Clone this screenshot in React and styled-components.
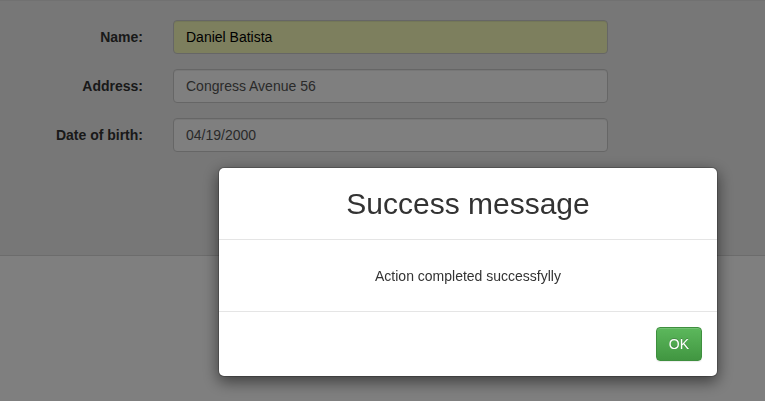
import React from "react";
import styled, { createGlobalStyle } from "styled-components";

const Global = createGlobalStyle`
  html, body { margin: 0; padding: 0; background: #fff; }
  body { font-family: "Liberation Sans", Arial, sans-serif; font-size: 14px; color: #333; }
  * { box-sizing: border-box; }
`;

const Panel = styled.div`
  height: 256px;
  background: #eeeeee;
  border-top: 1px solid #e2e2e2;
  border-bottom: 1px solid #d8d8d8;
  padding-top: 19px;
`;

const Form = styled.form`
  display: flex;
  flex-direction: column;
  gap: 15px;
  margin: 0;
`;

const Row = styled.div`
  display: flex;
  align-items: center;
`;

const Label = styled.label`
  width: 143px;
  margin-right: 30px;
  text-align: right;
  font-weight: bold;
  font-size: 14px;
  color: #333;
`;

const Input = styled.input`
  width: 435px;
  height: 34px;
  padding: 6px 12px;
  font-family: "Liberation Sans", Arial, sans-serif;
  font-size: 14px;
  color: ${(p) => (p.$autofill ? "#000" : "#555")};
  background: ${(p) => (p.$autofill ? "rgb(250,255,189)" : "#fff")};
  border: 1px solid #ccc;
  border-radius: 4px;
  box-shadow: inset 0 1px 1px rgba(0, 0, 0, 0.075);
  outline: none;
`;

const Overlay = styled.div`
  position: fixed;
  inset: 0;
  background: rgba(0, 0, 0, 0.5);
  padding: 167px 0 0 218px;
`;

const Modal = styled.div`
  width: 500px;
  background: #fff;
  border: 1px solid rgba(0, 0, 0, 0.2);
  border-radius: 6px;
  box-shadow: 0 5px 15px rgba(0, 0, 0, 0.5);
  background-clip: padding-box;
`;

const Header = styled.div`
  height: 72px;
  display: flex;
  align-items: center;
  justify-content: center;
  border-bottom: 1px solid #e5e5e5;
`;

const Title = styled.h2`
  margin: 0;
  font-size: 30px;
  font-weight: normal;
  color: #333;
  line-height: 1.1;
`;

const Body = styled.div`
  height: 72px;
  display: flex;
  align-items: center;
  justify-content: center;
  border-bottom: 1px solid #e5e5e5;
  font-size: 14px;
  color: #333;
`;

const Footer = styled.div`
  display: flex;
  justify-content: flex-end;
  padding: 15px;
`;

const Button = styled.button`
  height: 34px;
  padding: 6px 12px;
  font-family: "Liberation Sans", Arial, sans-serif;
  font-size: 14px;
  color: #fff;
  background: linear-gradient(to bottom, #5cb85c 0%, #419641 100%);
  border: 1px solid #3e8f3e;
  border-radius: 4px;
  text-shadow: 0 -1px 0 rgba(0, 0, 0, 0.2);
  box-shadow: inset 0 1px 0 rgba(255, 255, 255, 0.15), 0 1px 1px rgba(0, 0, 0, 0.075);
  cursor: pointer;
`;

export default function App() {
  return (
    <>
      <Global />
      <Panel>
        <Form>
          <Row>
            <Label>Name:</Label>
            <Input $autofill defaultValue="Daniel Batista" />
          </Row>
          <Row>
            <Label>Address:</Label>
            <Input defaultValue="Congress Avenue 56" />
          </Row>
          <Row>
            <Label>Date of birth:</Label>
            <Input defaultValue="04/19/2000" />
          </Row>
        </Form>
      </Panel>
      <Overlay>
        <Modal>
          <Header>
            <Title>Success message</Title>
          </Header>
          <Body>Action completed successfylly</Body>
          <Footer>
            <Button>OK</Button>
          </Footer>
        </Modal>
      </Overlay>
    </>
  );
}
